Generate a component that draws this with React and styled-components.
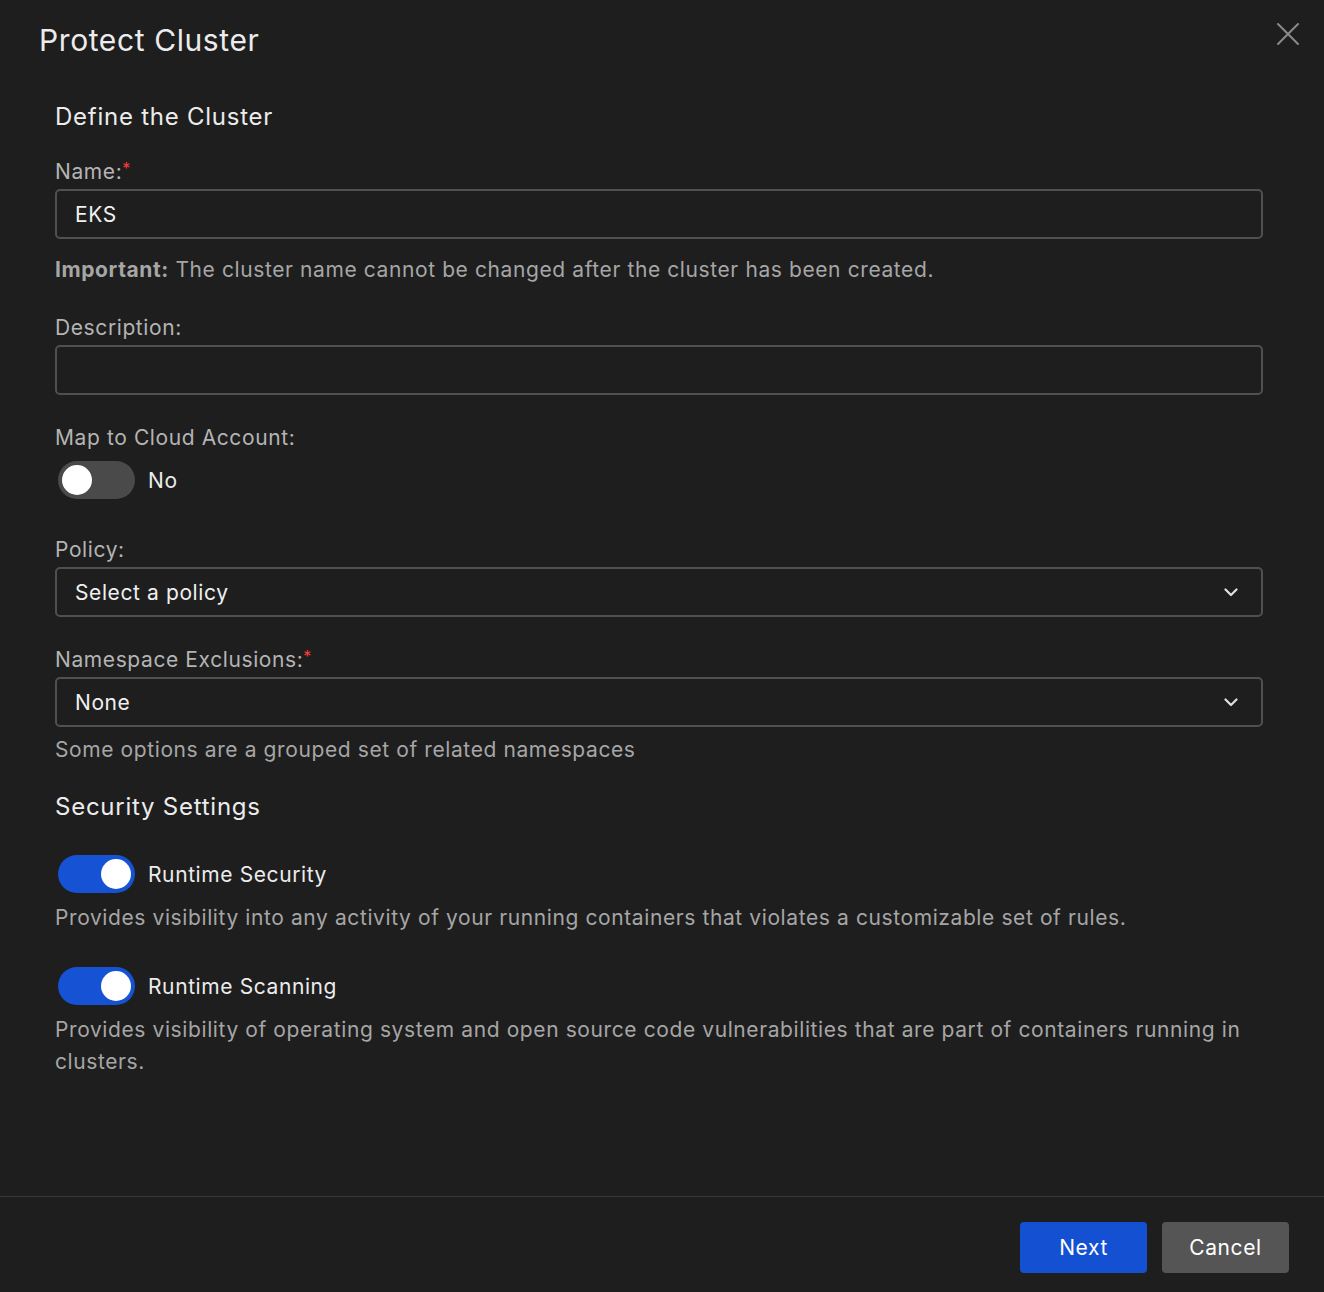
import React, { useState } from "react";
import styled, { createGlobalStyle } from "styled-components";

const GlobalStyle = createGlobalStyle`
  html, body {
    margin: 0;
    padding: 0;
    background: #1e1e1e;
  }
  body {
    font-family: Inter, "Noto Sans", "Liberation Sans", sans-serif;
    letter-spacing: 0.6px;
    -webkit-font-smoothing: antialiased;
  }
`;

const Modal = styled.div`
  display: flex;
  flex-direction: column;
  height: 1292px;
  background: #1e1e1e;
  color: #e6e6e6;
  box-sizing: border-box;
`;

const Header = styled.div`
  display: flex;
  justify-content: space-between;
  align-items: flex-start;
  padding: 22px 24px 0 39px;
`;

const Title = styled.h1`
  margin: 0;
  font-size: 30px;
  line-height: 36px;
  font-weight: 400;
  color: #ececec;
`;

const CloseButton = styled.button`
  background: none;
  border: none;
  padding: 0;
  margin-top: 0;
  cursor: pointer;
  display: flex;
`;

const Body = styled.div`
  flex: 1;
  padding: 0 61px 0 55px;
  display: flex;
  flex-direction: column;
`;

const SectionTitle = styled.h2`
  margin: ${({ top }) => top}px 0 0;
  font-size: 24px;
  line-height: 30px;
  font-weight: 400;
  letter-spacing: 0.75px;
  color: #ececec;
`;

const Label = styled.label`
  display: block;
  margin-top: ${({ top }) => top}px;
  font-size: 21px;
  line-height: 24px;
  color: #b4b4b4;
`;

const Required = styled.span`
  color: #ff3b3b;
  font-size: 16px;
  vertical-align: top;
  line-height: 16px;
`;

const Input = styled.input`
  display: block;
  box-sizing: border-box;
  width: 100%;
  height: 50px;
  margin-top: 5px;
  padding: 0 18px;
  background: #1e1e1e;
  border: 2px solid #505050;
  border-radius: 5px;
  color: #f0f0f0;
  font-family: inherit;
  font-size: 21px;
  letter-spacing: 0.6px;
  outline: none;
`;

const Select = styled.div`
  display: flex;
  align-items: center;
  justify-content: space-between;
  box-sizing: border-box;
  height: 50px;
  margin-top: 5px;
  padding: 0 23px 0 18px;
  border: 2px solid #505050;
  border-radius: 5px;
  font-size: 21px;
  color: #f0f0f0;
  cursor: pointer;
`;

const Help = styled.p`
  margin: ${({ top }) => top}px 0 0;
  font-size: 21px;
  line-height: 32px;
  color: #a6a6a6;
  strong {
    font-weight: 700;
  }
`;

const ToggleRow = styled.div`
  display: flex;
  align-items: center;
  gap: 13px;
  margin-top: ${({ top }) => top}px;
  padding-left: 3px;
`;

const Track = styled.button`
  position: relative;
  width: 77px;
  height: 38px;
  border-radius: 19px;
  border: none;
  padding: 0;
  cursor: pointer;
  background: ${({ on }) => (on ? "#1552d4" : "#4a4a4a")};
  &::after {
    content: "";
    position: absolute;
    top: 4px;
    left: ${({ on }) => (on ? "43px" : "4px")};
    width: 30px;
    height: 30px;
    border-radius: 50%;
    background: #ffffff;
  }
`;

const ToggleText = styled.span`
  font-size: 21px;
  color: #ececec;
`;

const Footer = styled.div`
  display: flex;
  justify-content: flex-end;
  gap: 15px;
  border-top: 1px solid #383838;
  padding: 25px 35px 19px;
`;

const Button = styled.button`
  width: 127px;
  height: 51px;
  border: none;
  border-radius: 4px;
  font-family: inherit;
  font-size: 21px;
  letter-spacing: 0.6px;
  color: #ffffff;
  cursor: pointer;
  background: ${({ primary }) => (primary ? "#1450d2" : "#555555")};
`;

const Chevron = () => (
  <svg width="14" height="9" viewBox="0 0 14 9" fill="none">
    <polyline points="1.5,1.5 7,7 12.5,1.5" stroke="#e0e0e0" strokeWidth="2.2" strokeLinecap="round" strokeLinejoin="round" />
  </svg>
);

const CloseIcon = () => (
  <svg width="24" height="24" viewBox="0 0 24 24" fill="none">
    <path d="M2 2 L22 22 M22 2 L2 22" stroke="#8a8a8a" strokeWidth="2" strokeLinecap="round" />
  </svg>
);

const Toggle = ({ top, initial, children }) => {
  const [on, setOn] = useState(initial);
  return (
    <ToggleRow top={top}>
      <Track on={on ? 1 : 0} onClick={() => setOn(!on)} />
      <ToggleText>{children || (on ? "Yes" : "No")}</ToggleText>
    </ToggleRow>
  );
};

const App = () => (
  <Modal>
    <GlobalStyle />
    <Header>
      <Title>Protect Cluster</Title>
      <CloseButton aria-label="close">
        <CloseIcon />
      </CloseButton>
    </Header>
    <Body>
      <SectionTitle top={44}>Define the Cluster</SectionTitle>

      <Label top={28}>
        Name:<Required>*</Required>
      </Label>
      <Input defaultValue="EKS" />
      <Help top={15}>
        <strong>Important:</strong> The cluster name cannot be changed after the cluster has been created.
      </Help>

      <Label top={30}>Description:</Label>
      <Input defaultValue="" />

      <Label top={31}>Map to Cloud Account:</Label>
      <Toggle top={11} initial={false} />

      <Label top={39}>Policy:</Label>
      <Select>
        Select a policy
        <Chevron />
      </Select>

      <Label top={31}>
        Namespace Exclusions:<Required>*</Required>
      </Label>
      <Select>
        None
        <Chevron />
      </Select>
      <Help top={7}>Some options are a grouped set of related namespaces</Help>

      <SectionTitle top={26}>Security Settings</SectionTitle>

      <Toggle top={33} initial={true}>Runtime Security</Toggle>
      <Help top={9}>
        Provides visibility into any activity of your running containers that violates a customizable set of rules.
      </Help>

      <Toggle top={33} initial={true}>Runtime Scanning</Toggle>
      <Help top={9}>
        Provides visibility of operating system and open source code vulnerabilities that are part of containers running in clusters.
      </Help>
    </Body>
    <Footer>
      <Button primary>Next</Button>
      <Button>Cancel</Button>
    </Footer>
  </Modal>
);

export default App;
